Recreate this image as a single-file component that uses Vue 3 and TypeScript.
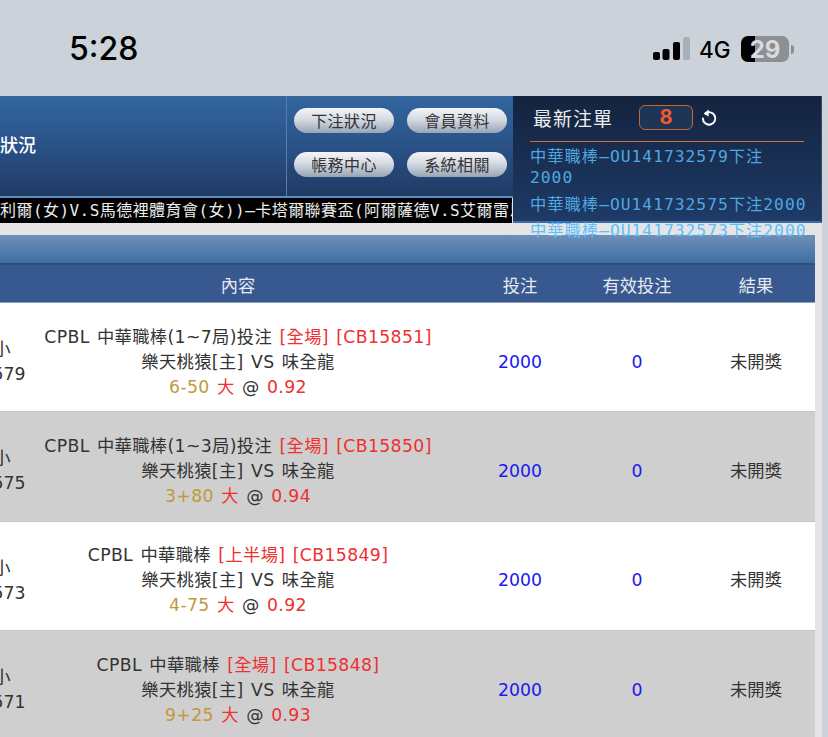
<script setup lang="ts">
interface Bet {
  id: string
  title: string
  tag: string
  line: string
  odds: string
}

const bets: Bet[] = [
  { id: '141732579', title: 'CPBL 中華職棒(1~7局)投注', tag: '[全場] [CB15851]', line: '6-50', odds: '0.92' },
  { id: '141732575', title: 'CPBL 中華職棒(1~3局)投注', tag: '[全場] [CB15850]', line: '3+80', odds: '0.94' },
  { id: '141732573', title: 'CPBL 中華職棒', tag: '[上半場] [CB15849]', line: '4-75', odds: '0.92' },
  { id: '141732571', title: 'CPBL 中華職棒', tag: '[全場] [CB15848]', line: '9+25', odds: '0.93' }
]

const navButtons = ['下注狀況', '會員資料', '帳務中心', '系統相關']
const latest = ['中華職棒–OU141732579下注\n2000', '中華職棒–OU141732575下注2000', '中華職棒–OU141732573下注2000']
</script>

<template>
  <div class="page">
    <div class="status-bar">
      <span class="clock">5:28</span>
      <div class="status-right">
        <svg class="signal" width="38" height="24" viewBox="0 0 38 24">
          <rect x="0" y="15" width="7" height="8" rx="2" fill="#000" />
          <rect x="9.5" y="12" width="7" height="11" rx="2" fill="#000" />
          <rect x="20" y="5" width="7" height="18" rx="2" fill="#000" />
          <rect x="30" y="0" width="7" height="23" rx="2" fill="#a9afb8" />
        </svg>
        <span class="net">4G</span>
        <div class="battery"><span>29</span></div>
        <span class="nub"></span>
      </div>
    </div>

    <div class="top">
      <div class="top-main">
        <div class="top-title"><span>下注狀況</span></div>
        <div class="nav-grid">
          <button v-for="b in navButtons" :key="b" class="nav-btn">{{ b }}</button>
        </div>
      </div>
      <div class="marquee">利爾(女)V.S馬德裡體育會(女))–卡塔爾聯賽盃(阿爾薩德V.S艾爾雷恩</div>
    </div>

    <div class="latest">
      <div class="latest-head">
        <span class="latest-title">最新注單</span>
        <span class="count">8</span>
        <svg width="20" height="20" viewBox="0 0 20 20" fill="none">
          <path d="M6.2 5.6A6.2 6.2 0 1 1 3.9 10.4" stroke="#fff" stroke-width="2" stroke-linecap="round" />
          <path d="M9.6 1.6 5 5.5l4.6 3.2z" fill="#fff" />
        </svg>
      </div>
      <div class="latest-list">
        <div v-for="(t, i) in latest" :key="t" class="latest-item" :class="{ last: i === 2 }">{{ t }}</div>
      </div>
    </div>

    <div class="table-wrap">
      <div class="table">
        <div class="band"></div>
        <div class="row head">
          <div></div>
          <div>內容</div>
          <div class="col-bet">投注</div>
          <div>有效投注</div>
          <div>結果</div>
        </div>
        <div v-for="(bet, i) in bets" :key="bet.id" class="row item" :class="{ alt: i % 2 === 1 }">
          <div>全場大小<br />{{ bet.id }}</div>
          <div class="content">
            <div>{{ bet.title }} <span class="red">{{ bet.tag }}</span></div>
            <div>樂天桃猿[主] VS 味全龍</div>
            <div><span class="gold">{{ bet.line }}</span> <span class="red">大</span> @ <span class="red">{{ bet.odds }}</span></div>
          </div>
          <div class="col-bet blue">2000</div>
          <div class="blue">0</div>
          <div>未開獎</div>
        </div>
      </div>
    </div>
  </div>
</template>

<style>
html,
body {
  margin: 0;
  background: #cbd2da;
  overflow: hidden;
}
</style>

<style scoped>
.page {
  position: relative;
  width: 828px;
  height: 737px;
  overflow: hidden;
  background: #cbd2da;
  font-family: "DejaVu Sans", "Noto Sans CJK TC", sans-serif;
  color: #333;
}

.status-bar {
  height: 96px;
  display: flex;
  justify-content: space-between;
  align-items: flex-start;
  box-sizing: border-box;
  padding: 30px 34px 0 69px;
}

.clock {
  font-family: Inter, "Liberation Sans", sans-serif;
  font-size: 32px;
  font-weight: 500;
  line-height: 38px;
  color: #000;
}

.status-right {
  display: flex;
  align-items: center;
  padding-top: 6px;
  height: 26px;
}

.signal {
  margin-right: 8px;
  margin-top: -1px;
}

.net {
  font-family: Inter, "Liberation Sans", sans-serif;
  font-size: 22.5px;
  font-weight: 500;
  color: #000;
  width: 42px;
}

.battery {
  width: 48px;
  height: 26px;
  border-radius: 7px;
  background: linear-gradient(90deg, #000 29%, #8e8f92 29%);
  display: flex;
  align-items: center;
  justify-content: center;
  font-family: Inter, "Liberation Sans", sans-serif;
  font-size: 24px;
  font-weight: 700;
  color: #d8dbe0;
}

.nub {
  width: 3px;
  height: 9px;
  margin-left: 2px;
  border-radius: 0 3px 3px 0;
  background: #8e8f92;
}

.top {
  width: 822px;
  background: #e5e5e5;
}

.top-main {
  height: 100px;
  display: flex;
  border-bottom: 2px solid #5b8cc4;
  background: linear-gradient(180deg, #33659f 0%, #2a5288 50%, #203a64 100%);
}

.top-title {
  width: 287px;
  box-sizing: border-box;
  border-right: 1px solid #5a7dab;
  display: flex;
  align-items: center;
  overflow: hidden;
  font-size: 18px;
  font-weight: 500;
  color: #fff;
  padding-bottom: 4px;
}

.top-title span {
  flex-shrink: 0;
  margin-left: -36px;
  white-space: nowrap;
}

.nav-grid {
  display: grid;
  grid-template-columns: 100px 100px;
  grid-auto-rows: 25px;
  column-gap: 13px;
  row-gap: 19px;
  padding: 12px 0 0 7px;
}

.nav-btn {
  border: none;
  padding: 0 0 2px;
  border-radius: 13px;
  background: linear-gradient(180deg, #f3f5f8 0%, #d6dbe3 45%, #98a4b6 100%);
  font-family: inherit;
  font-size: 16px;
  letter-spacing: 0.4px;
  color: #333;
}

.marquee {
  width: 512px;
  height: 25px;
  line-height: 25px;
  background: #000;
  color: #ececec;
  font-family: "DejaVu Sans Mono", "Noto Sans CJK TC", monospace;
  font-size: 16px;
  letter-spacing: 0.45px;
  white-space: nowrap;
  overflow: hidden;
}

.latest {
  position: absolute;
  left: 513px;
  top: 96px;
  width: 309px;
  height: 127px;
  box-sizing: border-box;
  padding: 0 17px;
  background: linear-gradient(180deg, #14233f 0%, #1e3a66 100%);
  border-bottom: 2px solid #3a6ea8;
  border-right: 1px solid #3a4a60;
  z-index: 2;
}

.latest-head {
  height: 46px;
  box-sizing: border-box;
  display: flex;
  align-items: center;
  border-bottom: 1px solid #c8703a;
  padding: 0 0 2px 3px;
}

.latest-title {
  width: 106px;
  font-size: 19px;
  letter-spacing: 1px;
  color: #eee;
}

.count {
  width: 54px;
  height: 25px;
  box-sizing: border-box;
  margin-right: 6px;
  border: 1.5px solid #c8662f;
  border-radius: 6px;
  background: #1e3557;
  color: #f0592a;
  font-family: Inter, "Liberation Sans", sans-serif;
  font-size: 20px;
  font-weight: 700;
  line-height: 22px;
  text-align: center;
}

.latest-list {
  width: 288px;
  padding-top: 4px;
}

.latest-item {
  font-family: "DejaVu Sans Mono", "Noto Sans CJK TC", monospace;
  font-size: 16.3px;
  letter-spacing: 1px;
  line-height: 21px;
  margin-bottom: 5.5px;
  color: #4fa8e0;
  white-space: pre-line;
}

.latest-item.last {
  color: #5cc0fa;
}

.table-wrap {
  width: 822px;
  height: 514px;
  box-sizing: border-box;
  padding: 12px 7px 0 0;
  background: #e5e5e5;
}

.table {
  height: 100%;
  overflow: hidden;
}

.band {
  height: 30px;
  box-sizing: border-box;
  border-bottom: 2px solid #2e4f7a;
  background: linear-gradient(180deg, #6f8fb8 0%, #3f6ea5 100%);
}

.row {
  display: grid;
  grid-template-columns: 134px 390px 162px 84px 154px;
  margin-left: -91px;
  width: 924px;
  text-align: center;
  font-size: 17.3px;
  white-space: nowrap;
}

.col-bet {
  padding-left: 12px;
}

.head {
  height: 38px;
  box-sizing: border-box;
  padding-top: 3px;
  line-height: 36px;
  background: #38598f;
  border-bottom: 1px solid #8fa0b8;
  color: #e6e9ef;
}

.item {
  height: 109.33px;
  box-sizing: border-box;
  padding-top: 10px;
  align-items: center;
  line-height: 25px;
  background: #fff;
  border-bottom: 1px solid #c4c4c4;
}

.item.alt {
  background: #cfcfcf;
}

.content {
  letter-spacing: 0.35px;
  word-spacing: 1.5px;
}

.red {
  color: #f03030;
}

.gold {
  color: #c09a3a;
}

.blue {
  color: #1a1aee;
}
</style>
